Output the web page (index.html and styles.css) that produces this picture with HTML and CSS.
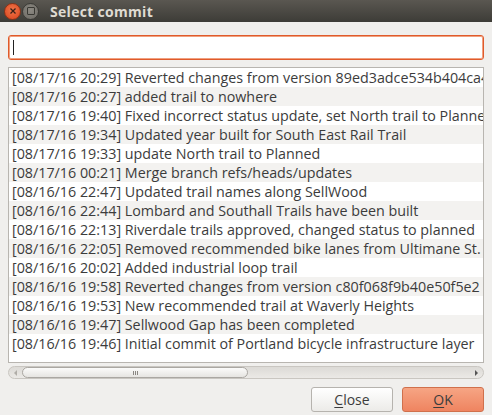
FILE: index.html
```html
<!DOCTYPE html>
<html>
<head>
<meta charset="utf-8">
<link rel="stylesheet" href="styles.css">
</head>
<body>
<div class="window">
  <div class="titlebar">
    <span class="wbtn wclose"><svg width="8" height="8" viewBox="0 0 8 8"><path d="M1.5 1.5L6.5 6.5M6.5 1.5L1.5 6.5" stroke="#3a2018" stroke-width="1.3"/></svg></span>
    <span class="wbtn wmin"><span class="sq"></span></span>
    <span class="title">Select commit</span>
  </div>
  <div class="content">
    <div class="search"><span class="caret"></span></div>
    <div class="list">
      <div class="row">[08/17/16 20:29] Reverted changes from version 89ed3adce534b404ca4</div>
      <div class="row">[08/17/16 20:27] added trail to nowhere</div>
      <div class="row">[08/17/16 19:40] Fixed incorrect status update, set North trail to Planned</div>
      <div class="row">[08/17/16 19:34] Updated year built for South East Rail Trail</div>
      <div class="row">[08/17/16 19:33] update North trail to Planned</div>
      <div class="row">[08/17/16 00:21] Merge branch refs/heads/updates</div>
      <div class="row">[08/16/16 22:47] Updated trail names along SellWood</div>
      <div class="row">[08/16/16 22:44] Lombard and Southall Trails have been built</div>
      <div class="row">[08/16/16 22:13] Riverdale trails approved, changed status to planned</div>
      <div class="row">[08/16/16 22:05] Removed recommended bike lanes from Ultimane St.</div>
      <div class="row">[08/16/16 20:02] Added industrial loop trail</div>
      <div class="row">[08/16/16 19:58] Reverted changes from version c80f068f9b40e50f5e2</div>
      <div class="row">[08/16/16 19:53] New recommended trail at Waverly Heights</div>
      <div class="row">[08/16/16 19:47] Sellwood Gap has been completed</div>
      <div class="row">[08/16/16 19:46] Initial commit of Portland bicycle infrastructure layer</div>
    </div>
    <div class="hscroll">
      <span class="arrow left"></span>
      <div class="track">
        <div class="thumb"><span class="grip"></span></div>
      </div>
      <span class="arrow right"></span>
    </div>
    <div class="buttons">
      <button class="btn"><u>C</u>lose</button>
      <button class="btn ok"><u>O</u>K</button>
    </div>
  </div>
</div>
</body>
</html>
```

FILE: styles.css
```css
html, body {
  margin: 0;
  padding: 0;
}
body {
  width: 492px;
  height: 415px;
  overflow: hidden;
  background: #f0efed;
  font-family: "Open Sans", "DejaVu Sans", sans-serif;
}
.window {
  display: flex;
  flex-direction: column;
  height: 415px;
}
.titlebar {
  height: 22px;
  background: linear-gradient(#5a5751, #3d3c37);
  display: flex;
  align-items: center;
  padding-left: 4px;
  box-sizing: border-box;
}
.wbtn {
  width: 17px;
  height: 17px;
  border-radius: 50%;
  display: flex;
  align-items: center;
  justify-content: center;
  box-sizing: border-box;
}
.wclose {
  background: radial-gradient(circle at 50% 40%, #f0764a, #d9431c);
  border: 1px solid #8a3318;
}
.wmin {
  margin-left: 1px;
  background: radial-gradient(circle at 50% 40%, #8d8a83, #6b6862);
  border: 1px solid #3b3a36;
}
.wmin .sq {
  width: 6px;
  height: 6px;
  border: 1px solid #3a3934;
  border-radius: 1px;
}
.title {
  margin-left: 11px;
  color: #dfdbd2;
  font-weight: bold;
  font-size: 14px;
  letter-spacing: 0.3px;
}
.content {
  flex: 1;
  padding: 13px 8px 0 8px;
  display: flex;
  flex-direction: column;
}
.search {
  height: 25px;
  box-sizing: border-box;
  border: 1px solid #e05a2b;
  box-shadow: inset 0 0 0 1px #f0a080;
  border-radius: 3px;
  background: #fff;
  display: flex;
  align-items: center;
  padding-left: 4px;
}
.caret {
  width: 1px;
  height: 15px;
  background: #222;
}
.list {
  margin-top: 7px;
  height: 296px;
  box-sizing: border-box;
  border: 1px solid #b8b5b0;
  background: #fff;
  overflow: hidden;
}
.row {
  height: 19px;
  line-height: 19px;
  padding-left: 3px;
  white-space: nowrap;
  font-size: 14.3px;
  color: #3c3c3c;
}
.row:nth-child(even) {
  background: #f3f2f0;
}
.hscroll {
  margin-top: 3px;
  height: 13px;
  display: flex;
  align-items: center;
  border: 1px solid #c9c6c1;
  border-radius: 7px;
  background: linear-gradient(#dcdad6, #ebe9e6);
  box-sizing: border-box;
}
.arrow {
  width: 0;
  height: 0;
  border-top: 3px solid transparent;
  border-bottom: 3px solid transparent;
}
.arrow.left {
  margin-left: 5px;
  border-right: 3px solid #b0ada8;
}
.arrow.right {
  margin-right: 5px;
  border-left: 3px solid #555;
}
.track {
  flex: 1;
  height: 100%;
  margin: 0 5px;
  display: flex;
  align-items: center;
}
.thumb {
  width: 226px;
  height: 11px;
  box-sizing: border-box;
  border: 1px solid #aaa7a2;
  border-radius: 6px;
  background: linear-gradient(#fbfbfa, #e6e4e1);
  display: flex;
  align-items: center;
  justify-content: center;
}
.grip {
  width: 5px;
  height: 4px;
  background: repeating-linear-gradient(90deg, #8a8782 0 1px, transparent 1px 2px);
}
.buttons {
  margin-top: 8px;
  display: flex;
  justify-content: flex-end;
  gap: 9px;
}
.btn {
  width: 82px;
  height: 25px;
  box-sizing: border-box;
  border: 1px solid #b6b3ae;
  border-radius: 3px;
  background: linear-gradient(#ffffff, #ecebe8);
  font-family: "Open Sans", "DejaVu Sans", sans-serif;
  font-size: 14px;
  color: #3c3c3c;
  padding: 0;
}
.btn.ok {
  border-color: #d0704c;
  background: linear-gradient(#f6a584, #ef8460);
}
.btn u {
  text-decoration-thickness: 1px;
  text-underline-offset: 2px;
}
```
